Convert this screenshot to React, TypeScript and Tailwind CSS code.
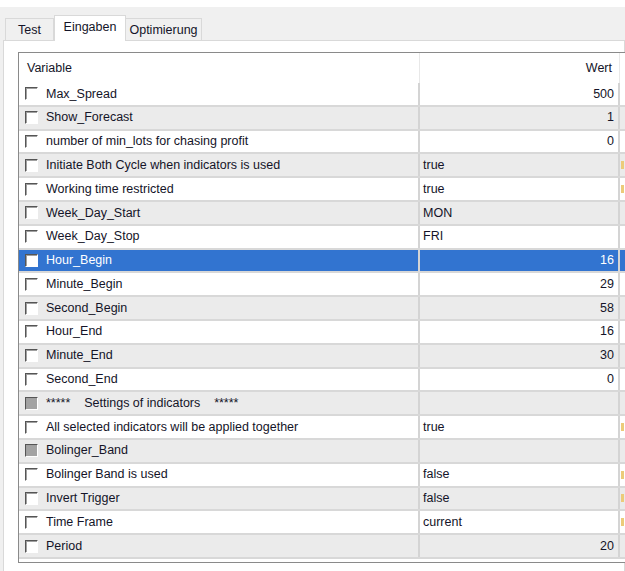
import React from 'react';

type Row = {
  name: string;
  value?: string;
  align?: 'left' | 'right';
  disabled?: boolean;
  selected?: boolean;
  mark?: boolean;
};

const rows: Row[] = [
  { name: 'Max_Spread', value: '500', align: 'right' },
  { name: 'Show_Forecast', value: '1', align: 'right' },
  { name: 'number of min_lots for chasing profit', value: '0', align: 'right' },
  { name: 'Initiate Both Cycle when indicators is used', value: 'true', mark: true },
  { name: 'Working time restricted', value: 'true', mark: true },
  { name: 'Week_Day_Start', value: 'MON' },
  { name: 'Week_Day_Stop', value: 'FRI' },
  { name: 'Hour_Begin', value: '16', align: 'right', selected: true },
  { name: 'Minute_Begin', value: '29', align: 'right' },
  { name: 'Second_Begin', value: '58', align: 'right' },
  { name: 'Hour_End', value: '16', align: 'right' },
  { name: 'Minute_End', value: '30', align: 'right' },
  { name: 'Second_End', value: '0', align: 'right' },
  { name: '*****    Settings of indicators    *****', disabled: true },
  { name: 'All selected indicators will be applied together', value: 'true', mark: true },
  { name: 'Bolinger_Band', disabled: true },
  { name: 'Bolinger Band is used', value: 'false', mark: true },
  { name: 'Invert Trigger', value: 'false', mark: true },
  { name: 'Time Frame', value: 'current', mark: true },
  { name: 'Period', value: '20', align: 'right' },
];

function CheckBox({ disabled }: { disabled?: boolean }) {
  return (
    <span
      className={`block w-[13px] h-[13px] shrink-0 border-t border-l border-[#555] border-r border-b border-r-white border-b-white shadow-[inset_1px_1px_0_#a0a0a0] ${
        disabled ? 'bg-[#a3a3a3]' : 'bg-white'
      }`}
    />
  );
}

export default function App() {
  return (
    <div className="w-[625px] h-[571px] overflow-hidden bg-[#f0f0f0] font-['Liberation_Sans',Arial,sans-serif] text-[12.5px] text-[#141428]">
      <div className="h-[7px] bg-white" />

      {/* tabs */}
      <div className="relative z-10 flex items-end h-[33px] pl-[5px]">
        <div className="flex items-center justify-center w-[49px] h-[22px] pt-[2px] border border-b-0 border-[#d9d9d9] bg-[#f0f0f0]">
          Test
        </div>
        <div className="flex items-center justify-center w-[72px] h-[26px] -mb-px pb-[3px] border border-b-0 border-[#d9d9d9] bg-white">
          Eingaben
        </div>
        <div className="flex items-center justify-center w-[76px] h-[22px] pt-[2px] border border-b-0 border-l-0 border-[#d9d9d9] bg-[#f0f0f0]">
          Optimierung
        </div>
      </div>

      {/* panel */}
      <div className="ml-[3px] h-[540px] bg-white border border-[#d9d9d9] pt-[11px] pl-[14px]">
        <div className="w-[660px] h-[511px] border border-[#8a8a8a] border-r-0 bg-white">
          <div className="flex h-[30px] items-center">
            <div className="w-[401px] h-full flex items-center pl-[8px] pt-[1px] border-r border-[#e8e8e8]">
              Variable
            </div>
            <div className="w-[200px] h-full flex items-center justify-end pr-[7px] pt-[1px] border-r border-[#e8e8e8]">
              Wert
            </div>
            <div className="flex-1" />
          </div>

          {rows.map((r, i) => {
            const bg = r.selected ? 'bg-[#3274d0] text-white' : i % 2 === 1 ? 'bg-[#ebebeb]' : 'bg-white';
            return (
              <div key={i} className={`flex h-[23.8px] border-b-2 border-[#d8d8d8] ${bg}`}>
                <div className="w-[401px] flex items-center pl-[6px] border-r-2 border-[#d4d4d4]">
                  <CheckBox disabled={r.disabled} />
                  <span className="ml-[8px] whitespace-pre">{r.name}</span>
                </div>
                <div
                  className={`w-[200px] flex items-center border-r-2 border-[#d4d4d4] ${
                    r.align === 'right' ? 'justify-end pr-[4px]' : 'pl-[3px]'
                  }`}
                >
                  {r.value}
                </div>
                <div className="flex-1 flex items-center pl-[1px]">
                  {r.mark && <span className="block w-[3px] h-[8px] bg-[#eccb7a]" />}
                </div>
              </div>
            );
          })}
        </div>
      </div>
    </div>
  );
}
